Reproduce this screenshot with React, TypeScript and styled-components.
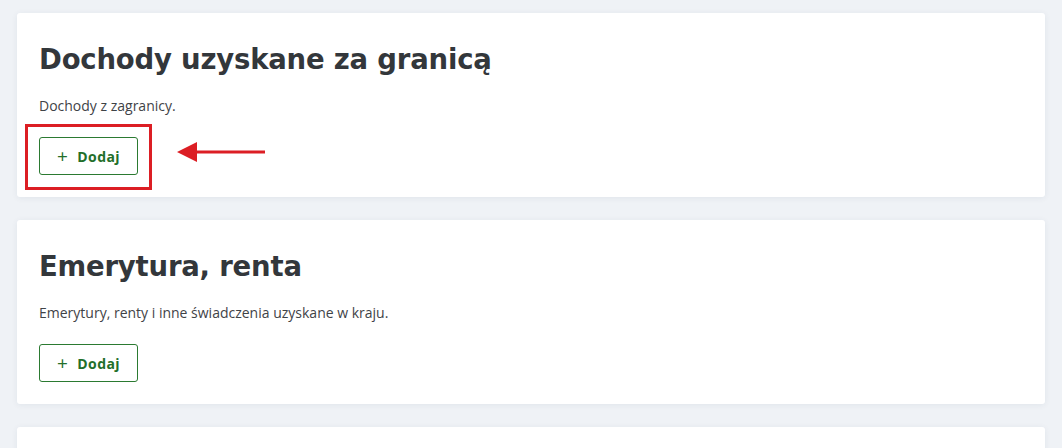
import React from 'react'
import styled, { createGlobalStyle } from 'styled-components'

//Income sections shown on the page
interface Section {
    title?: string
    description?: string
    highlighted?: boolean
}

const sections: Array<Section> = [
    {
        title: 'Dochody uzyskane za granicą',
        description: 'Dochody z zagranicy.',
        highlighted: true,
    },
    {
        title: 'Emerytura, renta',
        description: 'Emerytury, renty i inne świadczenia uzyskane w kraju.',
    },
    {},
]

const GlobalStyle = createGlobalStyle`
    html, body {
        margin: 0;
        padding: 0;
        background: #eff2f6;
        overflow: hidden;
    }
    * {
        box-sizing: border-box;
    }
`

const App: React.FC = () => {
    return (
        <>
            <GlobalStyle />
            <Page>
                {sections.map((section, index) => (
                    <Card key={index}>
                        {section.title && (
                            <>
                                <Title>{section.title}</Title>
                                <Description>{section.description}</Description>
                                <ButtonArea>
                                    <AddButton type="button">
                                        <Plus>+</Plus>
                                        Dodaj
                                    </AddButton>
                                    {section.highlighted && (
                                        <>
                                            <Highlight />
                                            <Arrow width="90" height="22" viewBox="0 0 90 22">
                                                <path d="M0 11 L20 1 L20 9.5 L88 9.5 L88 12.5 L20 12.5 L20 21 Z" fill="#dc1e24" />
                                            </Arrow>
                                        </>
                                    )}
                                </ButtonArea>
                            </>
                        )}
                    </Card>
                ))}
            </Page>
        </>
    )
}

export default App

const Page = styled.div`
    display: flex;
    flex-direction: column;
    gap: 23px;
    padding: 13px 17px 0 17px;
    width: 1062px;
`

const Card = styled.div`
    background: #ffffff;
    border-radius: 3px;
    box-shadow: 0 1px 6px rgba(30, 50, 90, 0.07);
    padding: 25px 22px 22px 22px;
    height: 184px;
    flex-shrink: 0;
`

const Title = styled.h2`
    margin: 0;
    font-family: 'DejaVu Sans', sans-serif;
    font-weight: 700;
    font-size: 27.5px;
    line-height: 42px;
    letter-spacing: -0.2px;
    color: #33373b;
`

const Description = styled.p`
    margin: 16px 0 0 0;
    font-family: 'Open Sans', sans-serif;
    font-size: 14px;
    line-height: 19px;
    color: #3f4347;
`

const ButtonArea = styled.div`
    position: relative;
    margin-top: 22px;
    width: 99px;
`

const AddButton = styled.button`
    display: flex;
    align-items: center;
    justify-content: center;
    gap: 9px;
    width: 99px;
    height: 38px;
    padding: 0;
    background: #ffffff;
    border: 1px solid #2b7a31;
    border-radius: 3px;
    font-family: 'Open Sans', sans-serif;
    font-weight: 700;
    font-size: 14px;
    color: #236f2a;
    letter-spacing: 0.4px;
    cursor: pointer;
`

const Plus = styled.span`
    font-weight: 400;
    font-size: 19px;
    line-height: 1;
    margin-top: 0;
`

const Highlight = styled.div`
    position: absolute;
    left: -14px;
    top: -13px;
    width: 127px;
    height: 66px;
    border: 3px solid #dc1e24;
    pointer-events: none;
`

const Arrow = styled.svg`
    position: absolute;
    left: 138px;
    top: 4px;
`
